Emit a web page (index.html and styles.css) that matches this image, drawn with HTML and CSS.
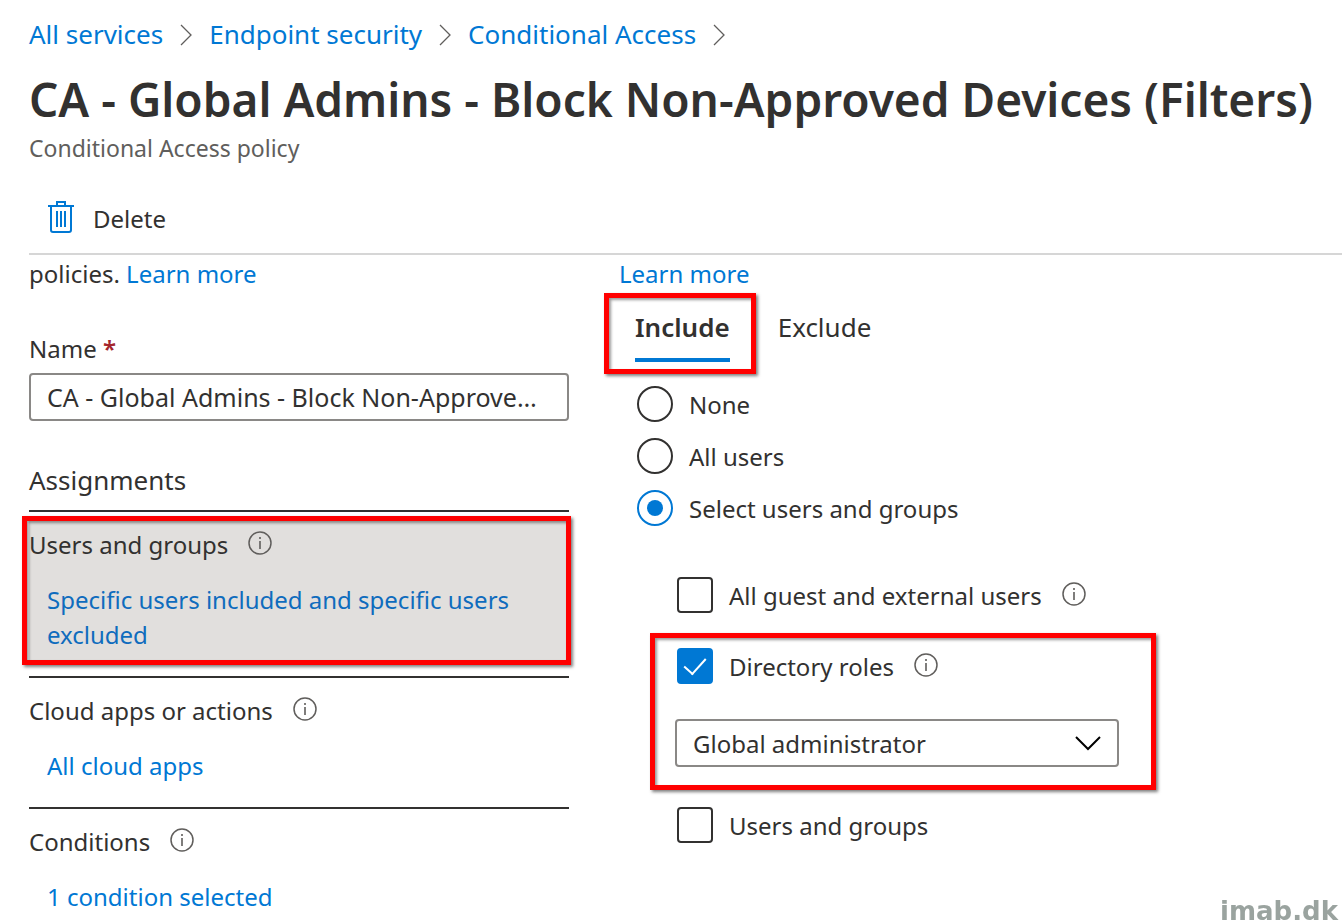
FILE: index.html
```html
<!DOCTYPE html>
<html lang="en">
  <head>
    <meta charset="UTF-8" />
    <meta name="viewport" content="width=device-width, initial-scale=1.0" />
    <title>CA - Global Admins - Block Non-Approved Devices (Filters)</title>
    <link rel="stylesheet" href="styles.css">
  </head>
  <body>
    <svg class="sprite" aria-hidden="true">
      <symbol id="chevron" viewBox="0 0 12 22">
        <path d="M1 1l10 10L1 21" fill="none" stroke="currentColor" stroke-width="1.3" />
      </symbol>
      <symbol id="info" viewBox="0 0 24 24">
        <circle cx="12" cy="12" r="11" fill="none" stroke="currentColor" stroke-width="1.5" />
        <path d="M12 10v8M12 6v2" stroke="currentColor" stroke-width="1.6" />
      </symbol>
    </svg>

    <header class="header">
      <nav class="breadcrumb">
        <a href="#">All services</a>
        <svg class="chevron"><use href="#chevron" /></svg>
        <a href="#">Endpoint security</a>
        <svg class="chevron"><use href="#chevron" /></svg>
        <a href="#">Conditional Access</a>
        <svg class="chevron"><use href="#chevron" /></svg>
      </nav>
      <h1>CA - Global Admins - Block Non-Approved Devices (Filters)</h1>
      <p class="subtitle">Conditional Access policy</p>
      <div class="toolbar">
        <button type="button" class="btn-delete">
          <svg class="trash" viewBox="0 0 26 32" fill="none" stroke="currentColor" stroke-width="2">
            <path d="M0 5h26M9 5V1h8v4M3 5v24q0 2 2 2h16q2 0 2-2V5" />
            <path d="M9 10v16M13 10v16M17 10v16" />
          </svg>
          Delete
        </button>
      </div>
    </header>

    <main class="content">
      <section class="policy">
        <p>policies. <a href="#">Learn more</a></p>

        <div class="form-group">
          <label for="name">Name <span class="required">*</span></label>
          <input type="text" id="name" class="field" value="CA - Global Admins - Block Non-Approved Devices (Filters)" />
        </div>

        <h2>Assignments</h2>

        <div class="assignment selected">
          <div class="assignment-title">Users and groups <svg class="info"><use href="#info" /></svg></div>
          <a href="#">Specific users included and specific users excluded</a>
          <span class="highlight"></span>
        </div>
        <div class="assignment">
          <div class="assignment-title">Cloud apps or actions <svg class="info"><use href="#info" /></svg></div>
          <a href="#">All cloud apps</a>
        </div>
        <div class="assignment">
          <div class="assignment-title">Conditions <svg class="info"><use href="#info" /></svg></div>
          <a href="#">1 condition selected</a>
        </div>
      </section>

      <section class="users">
        <p><a href="#">Learn more</a></p>

        <div class="tabs" role="tablist">
          <div class="tab-wrap">
            <button type="button" class="tab active" role="tab" aria-selected="true">Include</button>
            <span class="highlight"></span>
          </div>
          <button type="button" class="tab" role="tab" aria-selected="false">Exclude</button>
        </div>

        <div class="radios">
          <label class="option"><input type="radio" name="scope" /> None</label>
          <label class="option"><input type="radio" name="scope" /> All users</label>
          <label class="option"><input type="radio" name="scope" checked /> Select users and groups</label>
        </div>

        <div class="checks">
          <label class="option"><input type="checkbox" /> All guest and external users <svg class="info"><use href="#info" /></svg></label>
          <div class="roles">
            <label class="option"><input type="checkbox" checked /> Directory roles <svg class="info"><use href="#info" /></svg></label>
            <div class="select-wrap">
              <select class="field" aria-label="Directory roles">
                <option>Global administrator</option>
              </select>
              <svg class="arrow" viewBox="0 0 26 16"><path d="M1 1l12 12L25 1" fill="none" stroke="currentColor" stroke-width="2" /></svg>
            </div>
            <span class="highlight"></span>
          </div>
          <label class="option"><input type="checkbox" /> Users and groups</label>
        </div>
      </section>
    </main>

    <div class="watermark">imab.dk</div>
  </body>
</html>
```

FILE: styles.css
```css
* {
  margin: 0;
  padding: 0;
  box-sizing: border-box;
}

body {
  font-family: "Segoe UI", "Noto Sans", sans-serif;
  font-size: 24px;
  line-height: 35px;
  color: #323130;
  background: #fff;
}

button,
input,
select {
  font: inherit;
  color: inherit;
}

a {
  color: #0078d4;
  text-decoration: none;
}

a:hover {
  text-decoration: underline;
}

.sprite {
  display: none;
}

.header {
  margin-left: 29px;
  padding-top: 17px;
  border-bottom: 2px solid #d6d6d6;
}

.breadcrumb {
  display: flex;
  align-items: center;
  gap: 17px;
  font-size: 26px;
}

.chevron {
  width: 12px;
  height: 22px;
  color: #605e5c;
}

h1 {
  margin-top: 16px;
  font-size: 46px;
  line-height: 62px;
  font-weight: 600;
  white-space: nowrap;
}

.subtitle {
  margin-top: 2px;
  font-size: 23px;
  line-height: 32px;
  color: #605e5c;
}

.toolbar {
  padding: 37px 19px 17px;
}

.btn-delete {
  display: flex;
  align-items: center;
  gap: 19px;
  border: none;
  background: none;
  cursor: pointer;
}

.trash {
  width: 26px;
  height: 32px;
  margin-bottom: 3px;
  color: #0078d4;
}

.content {
  display: grid;
  grid-template-columns: 540px 1fr;
  gap: 50px;
  padding: 1px 29px 0;
}

.form-group {
  margin: 40px 0 42px;
}

.form-group label {
  display: block;
  margin-bottom: 7px;
}

.required {
  color: #a4262c;
  font-weight: 600;
}

.field {
  display: block;
  width: 100%;
  height: 48px;
  padding: 0 24px 0 16px;
  border: 2px solid #8a8886;
  border-radius: 4px;
  background: #fff;
  text-overflow: ellipsis;
}

input.field {
  font-size: 25px;
}

h2 {
  margin-bottom: 12px;
  font-size: 26px;
  font-weight: 400;
}

.assignment {
  position: relative;
  padding: 15px 0 24px;
  border-top: 2px solid #323130;
}

.assignment-title {
  display: flex;
  align-items: center;
  gap: 20px;
  margin-bottom: 20px;
}

.assignment > a {
  display: block;
  padding: 0 18px;
}

.selected {
  background: linear-gradient(#e1dfdd, #e1dfdd) 0 8px / 100% 140px no-repeat;
}

.selected > a {
  color: #0f6cbd;
}

.info {
  flex: none;
  width: 24px;
  height: 24px;
  margin-bottom: 3px;
  color: #605e5c;
}

/* red callout frames */
.highlight {
  position: absolute;
  border: 5px solid #f00;
  box-shadow: 2px 2px 3px rgba(0, 0, 0, 0.5), inset 2px 2px 3px rgba(0, 0, 0, 0.4);
  pointer-events: none;
}

.selected .highlight {
  inset: 4px -2px 11px -7px;
}

.tabs {
  display: flex;
  gap: 48px;
  padding: 19px 16px 0;
}

.tab-wrap {
  position: relative;
}

.tab-wrap .highlight {
  inset: -17px -26px -12px -31px;
}

.tab {
  padding-bottom: 13px;
  border: none;
  border-bottom: 4px solid transparent;
  background: none;
  font-size: 26px;
  cursor: pointer;
}

.tab.active {
  border-bottom-color: #0078d4;
  font-weight: 600;
}

.radios {
  display: grid;
  gap: 16px;
  padding: 24px 18px 0;
}

.option {
  display: flex;
  align-items: center;
  gap: 16px;
}

.option input {
  appearance: none;
  flex: none;
  display: grid;
  place-items: center;
  width: 36px;
  height: 36px;
  border: 2px solid #323130;
  border-radius: 4px;
}

.option input[type="radio"] {
  border-radius: 50%;
}

.option input[type="radio"]:checked {
  border-color: #0078d4;
}

.option input[type="radio"]:checked::after {
  content: "";
  width: 16px;
  height: 16px;
  border-radius: 50%;
  background: #0078d4;
}

.option input[type="checkbox"]:checked {
  border-color: #0078d4;
  background: #0078d4;
}

.option input[type="checkbox"]:checked::after {
  content: "";
  width: 10px;
  height: 19px;
  margin-bottom: 6px;
  border: solid #fff;
  border-width: 0 2px 2px 0;
  transform: rotate(42deg);
}

.option .info {
  margin-left: 4px;
}

.checks {
  padding: 51px 58px 0;
}

.roles {
  position: relative;
  padding: 35px 0 40px;
}

.roles .highlight {
  inset: 20px auto 17px -27px;
  width: 506px;
}

.select-wrap {
  position: relative;
  width: 444px;
  margin: 35px 0 0 -2px;
}

.select-wrap select {
  appearance: none;
}

.arrow {
  position: absolute;
  top: 17px;
  right: 18px;
  width: 26px;
  height: 16px;
  color: #000;
  pointer-events: none;
}

.watermark {
  position: fixed;
  right: 4px;
  bottom: 0;
  font-family: "DejaVu Sans", sans-serif;
  font-size: 26px;
  line-height: 26px;
  font-weight: 700;
  color: #9aa39f;
}
```
